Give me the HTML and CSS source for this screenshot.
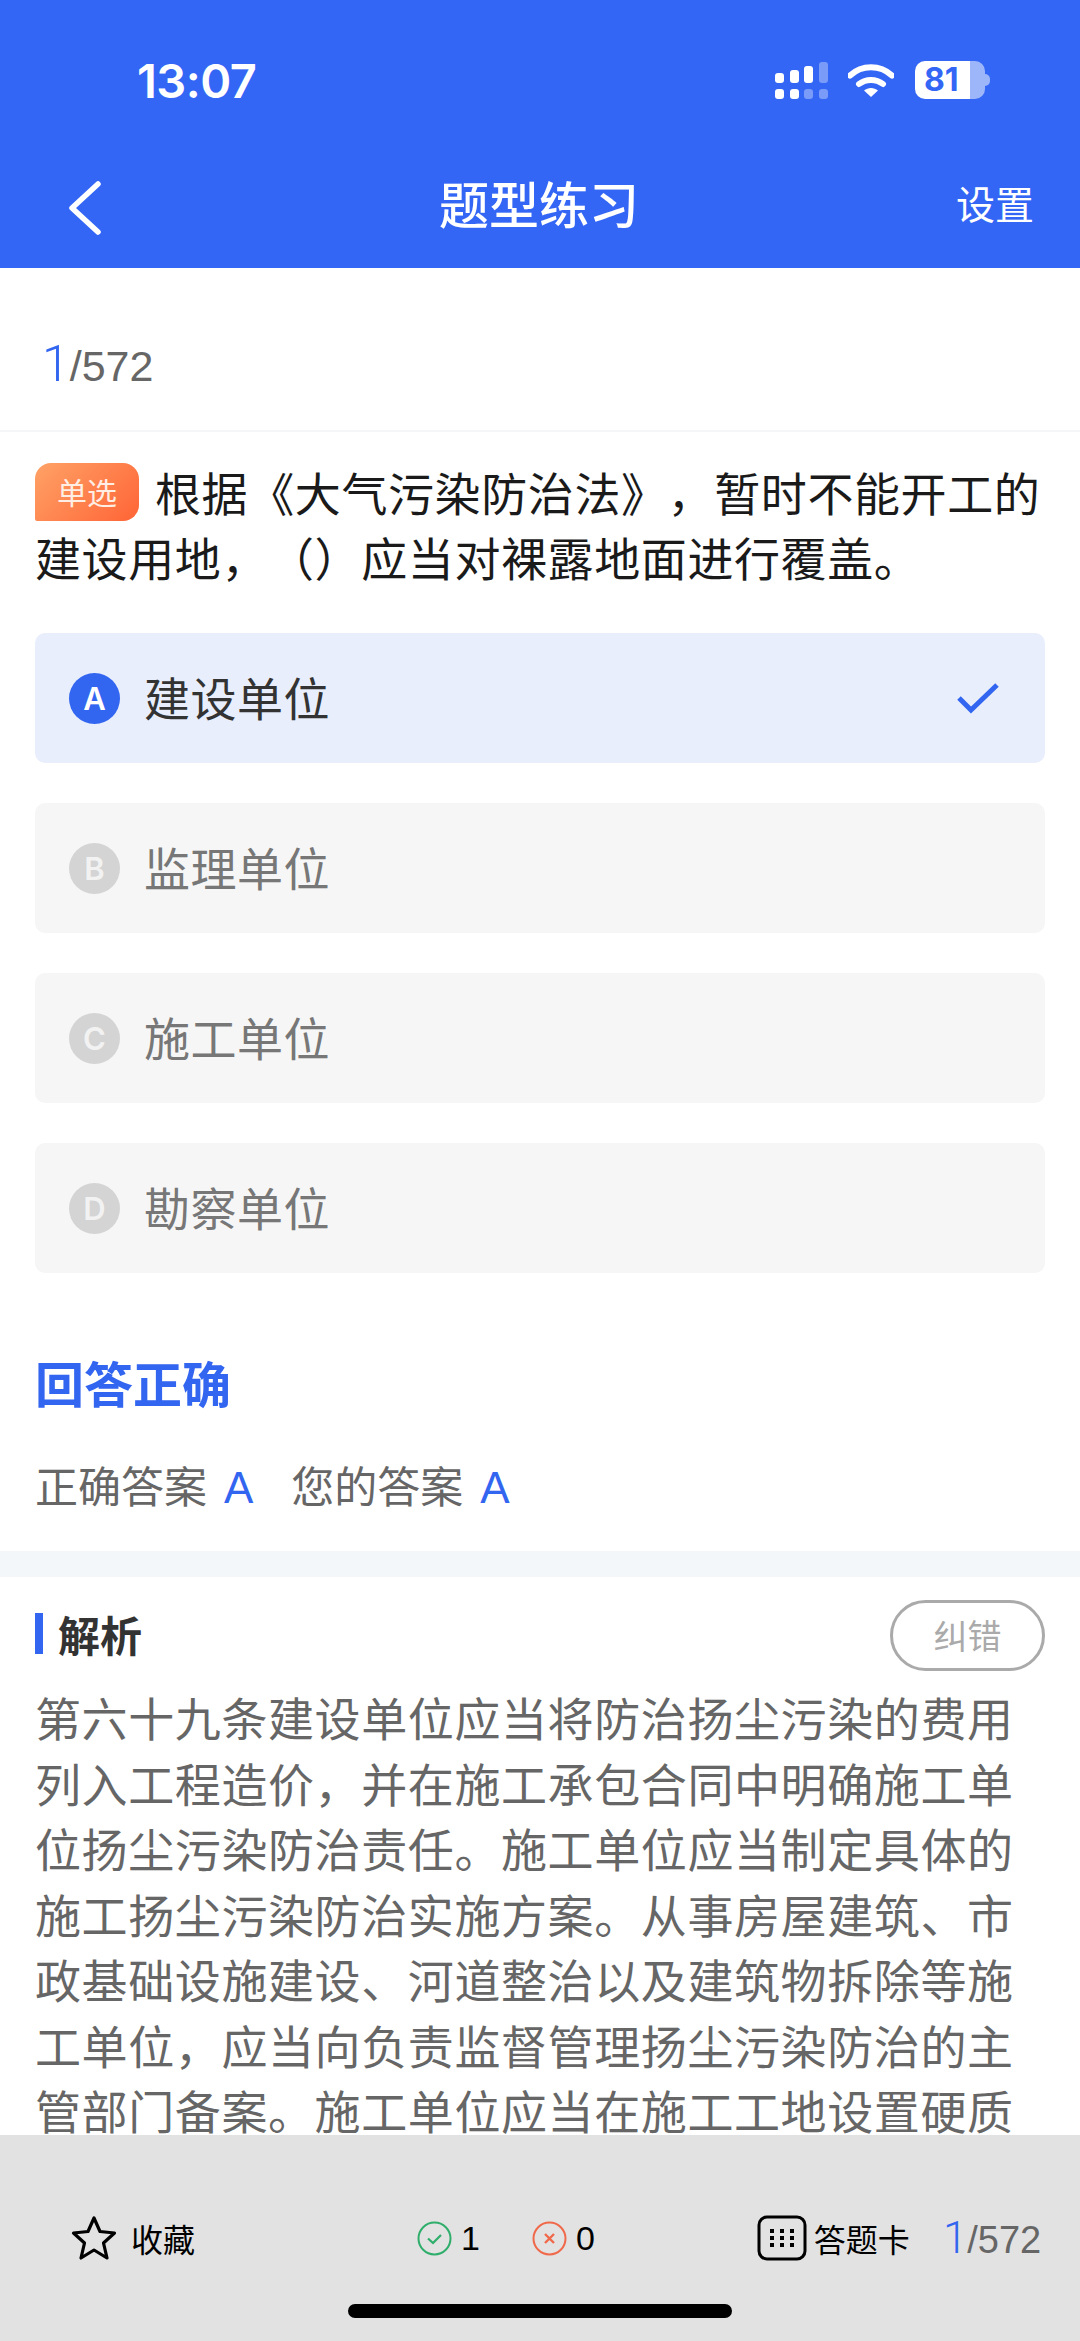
FILE: index.html
```html
<!DOCTYPE html>
<html lang="zh-CN">
<head>
    <meta charset="UTF-8">
    <meta name="viewport" content="width=device-width, initial-scale=1.0">
    <title>题型练习</title>
    <link rel="stylesheet" href="styles.css">
</head>
<body>

<div class="page">
    <header class="header">
        <div class="status">
            <span class="time">13:07</span>
            <div class="status-icons">
                <svg class="signal" width="53" height="37" viewBox="0 0 53 37">
                    <rect x="0" y="11" width="9" height="10" rx="3" fill="#fff"/>
                    <rect x="15" y="8" width="9" height="13" rx="3" fill="#fff"/>
                    <rect x="29" y="4" width="9" height="17" rx="3" fill="#fff"/>
                    <rect x="44" y="0" width="9" height="21" rx="3" fill="#fff" opacity=".35"/>
                    <rect x="0" y="27" width="9" height="10" rx="3" fill="#fff"/>
                    <rect x="15" y="27" width="9" height="10" rx="3" fill="#fff"/>
                    <rect x="29" y="27" width="9" height="10" rx="3" fill="#fff" opacity=".35"/>
                    <rect x="44" y="27" width="9" height="10" rx="3" fill="#fff" opacity=".35"/>
                </svg>
                <svg class="wifi" width="46" height="33" viewBox="0 0 46 33">
                    <path d="M2 11.5C14 0.5 32 0.5 44 11.5" fill="none" stroke="#fff" stroke-width="6" stroke-linecap="round"/>
                    <path d="M11 20C18 14.5 28 14.5 35 20" fill="none" stroke="#fff" stroke-width="6" stroke-linecap="round"/>
                    <path d="M16 26.5C20 23 26 23 30 26.5L23 33Z" fill="#fff"/>
                </svg>
                <div class="battery">
                    <div class="battery-body"><span class="battery-num">81</span></div>
                    <div class="battery-nub"></div>
                </div>
            </div>
        </div>
        <div class="nav">
            <svg class="back" width="34" height="54" viewBox="0 0 34 54">
                <path d="M30 3L4 27L30 51" fill="none" stroke="#fff" stroke-width="5.5" stroke-linecap="round" stroke-linejoin="round"/>
            </svg>
            <h1 class="nav-title">题型练习</h1>
            <span class="nav-right">设置</span>
        </div>
    </header>

    <main class="content">
        <div class="counter"><span class="counter-cur">1</span>/572</div>

        <section class="question">
            <p class="question-text"><span class="tag">单选</span>根据《大气污染防治法》，暂时不能开工的建设用地，（）应当对裸露地面进行覆盖。</p>

            <div class="option option-right">
                <span class="letter">A</span>
                <span class="option-text">建设单位</span>
                <svg class="check" width="44" height="32" viewBox="0 0 44 32">
                    <path d="M3 16L15 28L41 3" fill="none" stroke="#3366f0" stroke-width="5"/>
                </svg>
            </div>
            <div class="option">
                <span class="letter">B</span>
                <span class="option-text">监理单位</span>
            </div>
            <div class="option">
                <span class="letter">C</span>
                <span class="option-text">施工单位</span>
            </div>
            <div class="option">
                <span class="letter">D</span>
                <span class="option-text">勘察单位</span>
            </div>
        </section>

        <section class="result">
            <h2 class="result-title">回答正确</h2>
            <div class="result-row">
                <span>正确答案<b class="answer">A</b></span>
                <span>您的答案<b class="answer">A</b></span>
            </div>
        </section>

        <section class="analysis">
            <div class="analysis-head">
                <h3 class="analysis-title">解析</h3>
                <span class="report">纠错</span>
            </div>
            <p class="analysis-text">第六十九条建设单位应当将防治扬尘污染的费用列入工程造价，并在施工承包合同中明确施工单位扬尘污染防治责任。施工单位应当制定具体的施工扬尘污染防治实施方案。从事房屋建筑、市政基础设施建设、河道整治以及建筑物拆除等施工单位，应当向负责监督管理扬尘污染防治的主管部门备案。施工单位应当在施工工地设置硬质</p>
        </section>
    </main>

    <footer class="bottom">
        <div class="bottom-row">
            <div class="bottom-item fav">
                <svg width="46" height="46" viewBox="0 0 46 46">
                    <path d="M23 3L29 16.5L43.5 18L32.5 28L36 43L23 35L10 43L13.5 28L2.5 18L17 16.5Z" fill="none" stroke="#000" stroke-width="3.2" stroke-linejoin="round"/>
                </svg>
                <span>收藏</span>
            </div>
            <div class="bottom-item stat stat-ok">
                <svg width="35" height="35" viewBox="0 0 35 35">
                    <circle cx="17.5" cy="17.5" r="16" fill="none" stroke="#2fae6b" stroke-width="2"/>
                    <path d="M11 17.5L16 22L24 14" fill="none" stroke="#2fae6b" stroke-width="2.2"/>
                </svg>
                <span>1</span>
            </div>
            <div class="bottom-item stat stat-no">
                <svg width="35" height="35" viewBox="0 0 35 35">
                    <circle cx="17.5" cy="17.5" r="16" fill="none" stroke="#f0694a" stroke-width="2"/>
                    <path d="M13 13L22 22M22 13L13 22" fill="none" stroke="#f0694a" stroke-width="2.4"/>
                </svg>
                <span>0</span>
            </div>
            <div class="bottom-item card">
                <svg width="50" height="46" viewBox="0 0 50 46">
                    <rect x="2" y="2" width="46" height="42" rx="8" fill="none" stroke="#000" stroke-width="3"/>
                    <g fill="#000">
                        <rect x="13" y="14" width="4" height="4"/><rect x="23" y="14" width="4" height="4"/><rect x="33" y="14" width="4" height="4"/>
                        <rect x="13" y="21" width="4" height="4"/><rect x="23" y="21" width="4" height="4"/><rect x="33" y="21" width="4" height="4"/>
                        <rect x="13" y="28" width="4" height="4"/><rect x="23" y="28" width="4" height="4"/><rect x="33" y="28" width="4" height="4"/>
                    </g>
                </svg>
                <span>答题卡</span>
            </div>
            <div class="bottom-count"><span class="bottom-cur">1</span>/572</div>
        </div>
        <div class="home-bar"></div>
    </footer>
</div>

</body>
</html>
```

FILE: styles.css
```css
* {
    box-sizing: border-box;
}

html, body {
    margin: 0;
    padding: 0;
}

body {
    font-family: "Noto Sans CJK SC", "Liberation Sans", sans-serif;
    background-color: #fff;
    text-spacing-trim: space-all;
}

.page {
    width: 1080px;
    height: 2341px;
    display: flex;
    flex-direction: column;
    overflow: hidden;
}

/* Top bar */
.header {
    height: 268px;
    flex-shrink: 0;
    background-color: #3366f5;
    color: #fff;
}

.status {
    height: 160px;
    display: flex;
    align-items: center;
    justify-content: space-between;
    padding: 0 90px 0 137px;
}

.time {
    font-family: Inter, "Liberation Sans", sans-serif;
    font-size: 47px;
    font-weight: 600;
    letter-spacing: -0.5px;
}

.status-icons {
    display: flex;
    align-items: center;
}

.wifi {
    margin-left: 20px;
}

.battery {
    display: flex;
    align-items: center;
    margin-left: 21px;
}

.battery-body {
    width: 70px;
    height: 38px;
    border-radius: 10px;
    background: linear-gradient(90deg, #fff 0, #fff 55px, #9db6fa 55px);
    padding-left: 9px;
    line-height: 38px;
}

.battery-num {
    font-family: Inter, "Liberation Sans", sans-serif;
    font-size: 32px;
    font-weight: 700;
    color: #3366f5;
}

.battery-nub {
    width: 5px;
    height: 12px;
    border-radius: 0 6px 6px 0;
    background-color: #9db6fa;
}

.nav {
    height: 84px;
    display: grid;
    grid-template-columns: 1fr auto 1fr;
    align-items: center;
    padding: 0 46px 0 68px;
}

.back {
    margin-top: 12px;
}

.nav-title {
    margin: 0 24px 0 0;
    font-size: 50px;
    font-weight: 500;
    line-height: 1;
    text-align: center;
}

.nav-right {
    justify-self: end;
    font-size: 39px;
    line-height: 1;
}

/* Scroll area, cut off by the bottom bar */
.content {
    flex: 1;
    min-height: 0;
    overflow: hidden;
}

.counter {
    height: 164px;
    padding: 68px 0 0 42px;
    font-family: "Liberation Sans", sans-serif;
    font-size: 43px;
    line-height: 56px;
    color: #666;
    border-bottom: 2px solid #f5f6f8;
}

.counter-cur {
    font-family: Roboto, sans-serif;
    font-size: 50px;
    font-weight: 300;
    color: #3366f0;
}

.question {
    padding: 27px 35px 0;
}

.question-text {
    margin: 0;
    font-size: 46px;
    letter-spacing: 0.6px;
    line-height: 65px;
    color: #1a1a1a;
}

.tag {
    display: inline-block;
    width: 104px;
    height: 58px;
    margin-right: 16px;
    border-radius: 16px 16px 16px 2px;
    background: linear-gradient(135deg, #ffa266, #ff6436);
    color: #ffeee4;
    font-size: 30px;
    line-height: 56px;
    letter-spacing: 0;
    text-align: center;
    vertical-align: 7px;
}

.option {
    height: 130px;
    margin-top: 40px;
    padding: 0 34px;
    display: flex;
    align-items: center;
    border-radius: 10px;
    background-color: #f6f6f6;
    color: #777;
}

.question-text + .option {
    margin-top: 44px;
}

.option-right {
    background-color: #e8eefc;
    color: #333;
}

.letter {
    width: 51px;
    height: 51px;
    flex-shrink: 0;
    border-radius: 50%;
    background-color: #d4d4d4;
    color: #f2f2f2;
    font-family: Inter, "Liberation Sans", sans-serif;
    font-size: 31px;
    font-weight: 600;
    line-height: 51px;
    text-align: center;
}

.option-right .letter {
    background-color: #3366f0;
    color: #fff;
}

.option-text {
    flex: 1;
    margin-left: 24px;
    padding-bottom: 5px;
    font-size: 46px;
    letter-spacing: 0.5px;
    line-height: 1;
}

.check {
    margin-right: 11px;
}

/* Answer summary */
.result {
    height: 304px;
    padding: 84px 35px 0;
    border-bottom: 26px solid #f4f7f9;
}

.result-title {
    margin: 0;
    font-size: 49px;
    font-weight: 700;
    line-height: 50px;
    color: #3366f0;
}

.result-row {
    display: flex;
    gap: 38px;
    margin-top: 52px;
    font-size: 43px;
    line-height: 50px;
    color: #666;
}

.answer {
    margin-left: 17px;
    font-family: "Liberation Sans", sans-serif;
    font-size: 44px;
    font-weight: 400;
    color: #3366f0;
}

/* Analysis */
.analysis {
    padding: 23px 35px 0;
}

.analysis-head {
    display: flex;
    align-items: center;
    justify-content: space-between;
    height: 70px;
}

.analysis-title {
    margin: 0 0 4px;
    padding-left: 15px;
    border-left: 8px solid #3366f0;
    font-size: 42px;
    font-weight: 700;
    line-height: 41px;
    color: #333;
}

.report {
    width: 155px;
    height: 71px;
    border: 3px solid #aaa;
    border-radius: 36px;
    color: #aaa;
    font-size: 34px;
    line-height: 63px;
    text-align: center;
}

.analysis-text {
    margin: 14px 0 0;
    font-size: 46px;
    letter-spacing: 0.6px;
    line-height: 65.5px;
    color: #666;
}

/* Bottom bar */
.bottom {
    height: 206px;
    flex-shrink: 0;
    background-color: #e2e2e2;
    color: #000;
}

.bottom-row {
    display: flex;
    align-items: center;
    height: 46px;
    margin-top: 80px;
    padding-left: 71px;
}

.bottom-item {
    display: flex;
    align-items: center;
    font-size: 32px;
    line-height: 1;
}

.fav span {
    margin-left: 14px;
}

.stat {
    font-family: "Liberation Sans", sans-serif;
    font-size: 34px;
}

.stat span {
    margin-left: 9px;
}

.stat-ok {
    margin-left: 222px;
}

.stat-no {
    margin-left: 52px;
}

.card {
    margin-left: 162px;
}

.card span {
    margin-left: 7px;
}

.bottom-count {
    margin-left: 33px;
    font-family: "Liberation Sans", sans-serif;
    font-size: 38px;
    color: #666;
}

.bottom-cur {
    font-family: Roboto, sans-serif;
    font-size: 44px;
    font-weight: 300;
    color: #3366f0;
}

.home-bar {
    width: 384px;
    height: 14px;
    margin: 43px auto 0;
    border-radius: 7px;
    background-color: #000;
}
```
